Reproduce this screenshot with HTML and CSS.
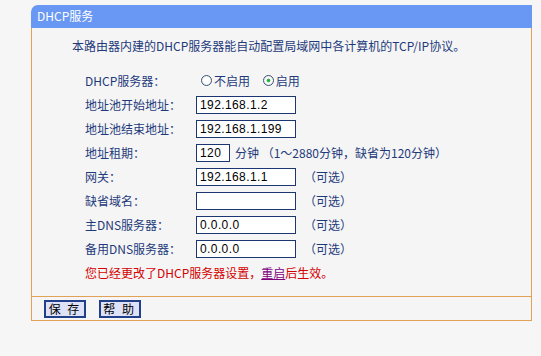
FILE: index.html
```html
<!DOCTYPE html>
<html lang="zh-CN">
<head>
    <meta charset="UTF-8">
    <title>DHCP服务</title>
    <link rel="stylesheet" href="styles.css">
</head>
<body>
    <div class="panel">
        <div class="panel-head">DHCP服务</div>
        <div class="panel-body">
            <p class="intro">本路由器内建的DHCP服务器能自动配置局域网中各计算机的TCP/IP协议。</p>
            <table class="form">
                <tr>
                    <td class="label">DHCP服务器：</td>
                    <td>
                        <label class="opt"><input type="radio" name="dhcp"><span>不启用</span></label>
                        <label class="opt"><input type="radio" name="dhcp" checked><span>启用</span></label>
                    </td>
                </tr>
                <tr>
                    <td class="label">地址池开始地址：</td>
                    <td><input class="ip" type="text" value="192.168.1.2"></td>
                </tr>
                <tr>
                    <td class="label">地址池结束地址：</td>
                    <td><input class="ip" type="text" value="192.168.1.199"></td>
                </tr>
                <tr>
                    <td class="label">地址租期：</td>
                    <td><input class="ip short" type="text" value="120"><span class="hint unit">分钟 （1～2880分钟，缺省为120分钟）</span></td>
                </tr>
                <tr>
                    <td class="label">网关：</td>
                    <td><input class="ip" type="text" value="192.168.1.1"><span class="hint">（可选）</span></td>
                </tr>
                <tr>
                    <td class="label">缺省域名：</td>
                    <td><input class="ip" type="text" value=""><span class="hint">（可选）</span></td>
                </tr>
                <tr>
                    <td class="label">主DNS服务器：</td>
                    <td><input class="ip" type="text" value="0.0.0.0"><span class="hint">（可选）</span></td>
                </tr>
                <tr>
                    <td class="label">备用DNS服务器：</td>
                    <td><input class="ip" type="text" value="0.0.0.0"><span class="hint">（可选）</span></td>
                </tr>
            </table>
            <p class="notice">您已经更改了DHCP服务器设置，<a href="#">重启</a>后生效。</p>
        </div>
        <div class="panel-foot">
            <button class="btn">保 存</button>
            <button class="btn">帮 助</button>
        </div>
    </div>
</body>
</html>
```

FILE: styles.css
```css
body {
  margin: 0;
  background-color: #f6f6f6;
  font-family: "Noto Sans CJK SC", "Liberation Sans", sans-serif;
  font-size: 12px;
  color: #1e3a7b;
}

.panel {
  width: 501px;
  margin: 5px 0 0 31px;
}

.panel-head {
  height: 23px;
  line-height: 22px;
  padding-left: 6px;
  background-color: #6898f4;
  border-top-left-radius: 7px;
  color: #fff;
}

.panel-body {
  border: 1px solid #e3a158;
  border-top: none;
  padding: 6px 0 11px 0;
  background-color: #f5f5f5;
}

.intro {
  margin: 0 0 10px 40px;
  line-height: 24px;
}

.form {
  border-collapse: collapse;
  margin-left: 53px;
}

.form td {
  height: 24px;
  padding: 0;
  white-space: nowrap;
}

.form td.label {
  width: 111px;
}

.opt {
  display: inline-flex;
  align-items: center;
  margin-right: 5px;
}

.opt input {
  appearance: none;
  width: 11px;
  height: 11px;
  margin: 0 2px 0 5px;
  border: 1px solid #3d5470;
  border-radius: 50%;
  background: radial-gradient(circle, #fff 40%, #dfe4ea 100%);
}

.opt input:checked {
  background: radial-gradient(circle, #22a83a 0, #3bbf4c 28%, #fff 34%, #dfe4ea 100%);
}

.ip {
  box-sizing: border-box;
  width: 100px;
  height: 18px;
  padding: 0 3px;
  margin: 0;
  border: 1px solid #1b3670;
  background-color: #fff;
  font-family: "Liberation Sans", sans-serif;
  font-size: 12px;
  letter-spacing: 0.4px;
  color: #000;
  vertical-align: middle;
}

.ip.short {
  width: 34px;
}

.hint {
  margin-left: 8px;
  vertical-align: middle;
}

.hint.unit {
  margin-left: 5px;
}

.notice {
  margin: 1px 0 0 53px;
  line-height: 24px;
  color: #d40000;
}

.notice a {
  color: #800080;
}

.panel-foot {
  height: 24px;
  padding: 3px 0 0 12px;
  box-sizing: border-box;
  border: 1px solid #e3a158;
  border-top: none;
  background-color: #f5f5f5;
}

.btn {
  width: 42px;
  height: 18px;
  padding: 0;
  margin: 0 10px 0 0;
  border: 2px solid #22408a;
  background-color: #dde2f8;
  font-family: "Noto Sans CJK SC", sans-serif;
  font-size: 12px;
  line-height: 14px;
  letter-spacing: 2px;
  color: #000;
  vertical-align: top;
}
```
